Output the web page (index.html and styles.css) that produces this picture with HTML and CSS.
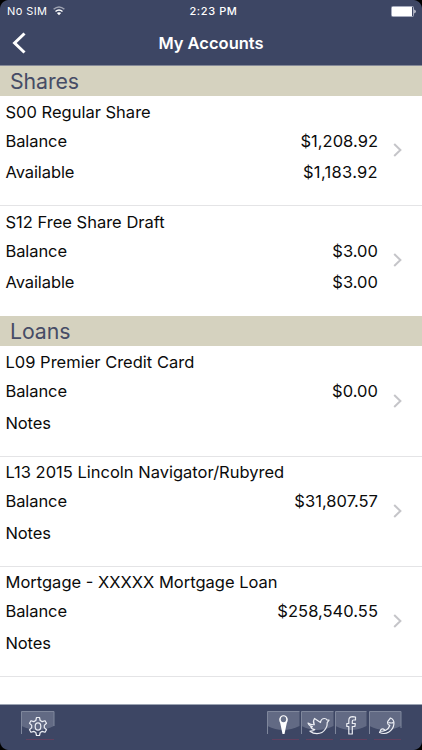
FILE: index.html
```html
<!DOCTYPE html>
<html lang="en">
<head>
<meta charset="utf-8">
<title>My Accounts</title>
<link rel="stylesheet" href="styles.css">
</head>
<body>
<div class="phone">
  <header class="header">
    <div class="status">
      <div class="carrier"><span>No SIM</span>
        <svg class="wifi" width="12" height="10" viewBox="0 0 12 10" fill="none" stroke="#fff" stroke-width="1.5"><path d="M.6 3.3Q6-1.3 11.4 3.3" opacity=".5"/><path d="M2.5 5.5Q6 2.6 9.5 5.5"/><path d="M6 9.2 3.9 7.1Q6 5.6 8.1 7.1Z" fill="#fff" stroke="none"/></svg>
      </div>
      <span class="time">2:23 PM</span>
      <svg class="battery" width="25" height="11" viewBox="0 0 25 11"><rect x=".5" y=".5" width="22" height="10" rx="1" fill="none" stroke="#a5aabd"/><rect x="1" y="1" width="20" height="9" fill="#fff"/><path d="M23.3 3.6Q24.7 4 24.7 5.5T23.3 7.4Z" fill="#dfe1e8"/></svg>
    </div>
    <div class="nav">
      <svg class="back" width="14" height="22" viewBox="0 0 14 22" fill="none" stroke="#fff" stroke-width="3"><path d="M12.5 1.5 2.6 11 12.5 20.5"/></svg>
      <h1>My Accounts</h1>
    </div>
  </header>
  <main>
    <h2>Shares</h2>
    <section class="row">
      <h3>S00 Regular Share</h3>
      <div class="line"><span>Balance</span><span class="amount">$1,208.92</span></div>
      <div class="line"><span>Available</span><span class="amount wide">$1,183.92</span></div>
      <svg class="chevron" width="9" height="14" viewBox="0 0 9 14"><path d="M1.2 1 7.4 7 1.2 13"/></svg>
    </section>
    <section class="row last">
      <h3>S12 Free Share Draft</h3>
      <div class="line"><span>Balance</span><span class="amount">$3.00</span></div>
      <div class="line"><span>Available</span><span class="amount">$3.00</span></div>
      <svg class="chevron" width="9" height="14" viewBox="0 0 9 14"><path d="M1.2 1 7.4 7 1.2 13"/></svg>
    </section>
    <h2>Loans</h2>
    <section class="row first-loan">
      <h3>L09 Premier Credit Card</h3>
      <div class="line"><span>Balance</span><span class="amount">$0.00</span></div>
      <div class="line notes"><span>Notes</span></div>
      <svg class="chevron" width="9" height="14" viewBox="0 0 9 14"><path d="M1.2 1 7.4 7 1.2 13"/></svg>
    </section>
    <section class="row loan">
      <h3>L13 2015 Lincoln Navigator/Rubyred</h3>
      <div class="line"><span>Balance</span><span class="amount">$31,807.57</span></div>
      <div class="line notes"><span>Notes</span></div>
      <svg class="chevron" width="9" height="14" viewBox="0 0 9 14"><path d="M1.2 1 7.4 7 1.2 13"/></svg>
    </section>
    <section class="row loan">
      <h3>Mortgage - XXXXX Mortgage Loan</h3>
      <div class="line"><span>Balance</span><span class="amount">$258,540.55</span></div>
      <div class="line notes"><span>Notes</span></div>
      <svg class="chevron" width="9" height="14" viewBox="0 0 9 14"><path d="M1.2 1 7.4 7 1.2 13"/></svg>
    </section>
  </main>
  <footer class="footer">
    <svg class="tool" width="34" height="31" viewBox="0 0 34 31"><path class="gloss" d="M.5.5H33V15Q17 23 .5 15Z"/><path class="edge" d="M.5 23V.5H33V15"/><path class="under" d="M5 28.5H33"/>
      <path class="ink" d="M15.5 6.5h3l.7 3 2 1.1 2.8-.9 1.5 2.6-2.2 2.1v2.2l2.2 2.1-1.5 2.6-2.8-.9-2 1.1-.7 3h-3l-.7-3-2-1.1-2.8.9-1.5-2.6 2.2-2.1v-2.2l-2.2-2.1 1.5-2.6 2.8.9 2-1.1z"/><ellipse class="ink" cx="17" cy="15.5" rx="2.8" ry="3.6"/></svg>
    <div class="social">
      <svg class="tool" width="34" height="31" viewBox="0 0 34 31"><path class="gloss" d="M.5.5H32.5V15Q16 23 .5 15Z"/><path class="edge" d="M.5 23V.5H32.5"/><path class="under" d="M5 28.5H32"/>
        <path d="M12.2 8.5a4.3 4.3 0 0 1 8.6 0q0 1.5-1 3.5L17.5 23h-2L13.2 12q-1-2-1-3.5Z" fill="#fff"/><ellipse cx="16.5" cy="8.3" rx="2.7" ry="3" fill="#687189"/></svg>
      <svg class="tool" width="34" height="31" viewBox="0 0 34 31"><path class="gloss" d="M.5.5H32.5V15Q16 23 .5 15Z"/><path class="edge" d="M.5 23V.5H32.5"/><path class="under" d="M5 28.5H32"/>
        <path class="ink" d="M7 12q3 2 6.3 1.7Q11.5 10.5 13.5 7.5l6 4q.5-4 4-4 1.800 0 2.500 1.500l2 .2-1.800 2.500q.3 3-1.600 6.100Q21.500 22.700 16 22.700q-4 0-7-2.500 3.200.2 4.800-1.600-3.200-.3-4-2.900h1.600Q7.500 14.600 7 12Z"/></svg>
      <svg class="tool" width="34" height="31" viewBox="0 0 34 31"><path class="gloss" d="M.5.5H31.5V15Q16 23 .5 15Z"/><path class="edge" d="M.5 23V.5H31.5"/><path class="under" d="M5 28.5H32"/>
        <path class="ink" d="M20.5 6v3h-2q-1.200 0-1.200 1.500v2h3l-.4 3h-2.600v7.500h-3.500v-7.500H11.800v-3h2v-3q0-3.800 4-3.800Z"/></svg>
      <svg class="tool" width="34" height="31" viewBox="0 0 34 31"><path class="gloss" d="M.5.5H32V15Q16 23 .5 15Z"/><path class="edge" d="M.5 23V.5H32V17"/><path class="under" d="M5 28.5H32"/>
        <path class="ink" d="M21.5 7q3.800 1.500 3.400 6-.5 5.200-5 8-4.400 2.700-9.400.5l1.500-3q1.700-1.300 3.500.2l1 .8q3.300-1.700 4.300-5l-1.500-1q-1.300-1.200-.5-3.200ZM19.500 11.500q3 1 4.800 0M11.500 20q3 .8 4.800-1"/></svg>
    </div>
  </footer>
  <div class="corners"><i class="tl"></i><i class="tr"></i><i class="bl"></i><i class="br"></i></div>
</div>
</body>
</html>
```
FILE: styles.css
```css
* { box-sizing: border-box; }
body { margin: 0; background: #fff; font-family: Inter, "Liberation Sans", sans-serif; color: #0b0b0b; }
h1, h2, h3 { margin: 0; font-weight: 400; }
svg { display: block; flex: none; }
.phone { position: relative; width: 422px; height: 750px; display: flex; flex-direction: column; overflow: hidden; }
.header { height: 66px; background: #3d4664; color: #fff; border-bottom: 1px solid #858997; }
.status { height: 22px; display: grid; grid-template-columns: 1fr auto 1fr; align-items: center; padding: 0 6px 0 7px; font-size: 11px; }
.carrier { display: flex; align-items: center; gap: 6px; letter-spacing: .4px; }
.time { font-weight: 500; letter-spacing: .6px; padding-left: 4px; }
.battery { justify-self: end; }
.nav { height: 42px; display: grid; grid-template-columns: 40px 1fr 40px; align-items: center; }
.back { margin-left: 12px; }
h1 { text-align: center; font-size: 16.5px; font-weight: 600; }
main { flex: 1; }
h2 { height: 30px; padding-left: 10px; background: #d5d2bf; color: #464c66; font-size: 21.3px; line-height: 31px; letter-spacing: -.1px; }
.row { position: relative; height: 110px; padding: 2px 44px 0 5.5px; border-bottom: 1px solid #e4e4e6; font-size: 16.5px; }
.row.last { border-bottom: 0; }
.row.first-loan { height: 111px; }
.row.loan { padding-top: 1px; }
h3 { height: 28px; line-height: 28px; font-size: 16.5px; white-space: nowrap; }
.line { display: flex; justify-content: space-between; height: 31px; line-height: 31px; letter-spacing: -.1px; }
.line.notes { line-height: 33px; }
.amount { letter-spacing: .03px; }
.amount.wide { letter-spacing: .3px; }
.chevron { position: absolute; right: 20.5px; top: 47px; fill: none; stroke: #c5c5c9; stroke-width: 2; }
.first-loan .chevron { top: 48px; }
.footer { height: 46px; display: flex; justify-content: space-between; padding: 6px 20px 0 21px; background: #3d4664; border-top: 1px solid #9ca4b3; }
.social { display: flex; margin-right: -1px; }
.gloss { fill: #687189; opacity: .85; }
.edge { fill: none; stroke: #7f879c; }
.under { stroke: #61405f; }
.ink { fill: none; stroke: #eceef4; stroke-width: 1.2; stroke-linejoin: round; }
.corners i { position: absolute; width: 9px; height: 9px; }
.tl { left: 0; top: 0; background: radial-gradient(circle at 100% 100%, transparent 8.5px, #000 9.5px); }
.tr { right: 0; top: 0; background: radial-gradient(circle at 0 100%, transparent 8.5px, #000 9.5px); }
.bl { left: 0; bottom: 0; background: radial-gradient(circle at 100% 0, transparent 8.5px, #000 9.5px); }
.br { right: 0; bottom: 0; background: radial-gradient(circle at 0 0, transparent 8.5px, #000 9.5px); }
```
